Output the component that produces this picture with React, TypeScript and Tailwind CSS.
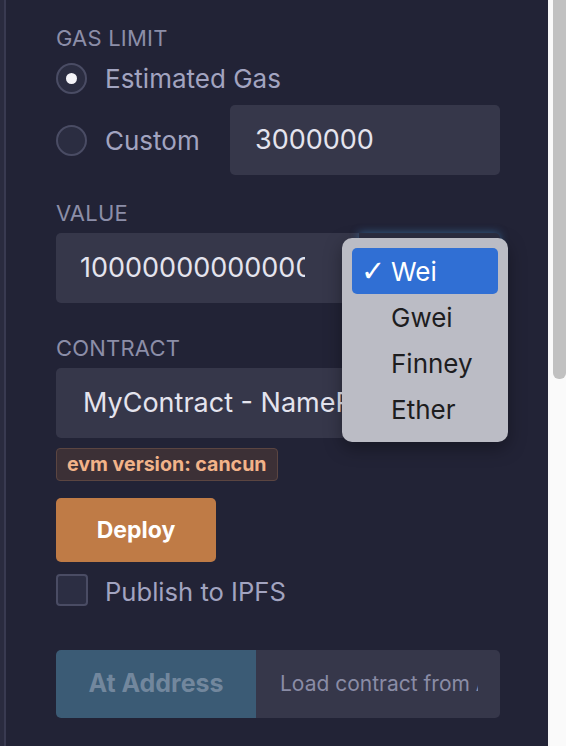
import React from "react";

const FONT = "font-['Inter','Noto_Sans',sans-serif]";

type RadioProps = { checked?: boolean };

function Radio({ checked }: RadioProps) {
  return (
    <span className="flex h-[31px] w-[31px] shrink-0 items-center justify-center rounded-full border-2 border-[#4a4c64] bg-[#2b2d41]">
      {checked ? <span className="h-[11px] w-[11px] rounded-full bg-[#f4f4f8]" /> : null}
    </span>
  );
}

function Label({ children }: { children: React.ReactNode }) {
  return (
    <div className="text-[22px] leading-[26px] uppercase tracking-[0.2px] text-[#8c8ea8]">
      {children}
    </div>
  );
}

const UNITS = ["Wei", "Gwei", "Finney", "Ether"];

function UnitMenu() {
  return (
    <div className="absolute left-[342px] top-[238px] w-[166px] rounded-[10px] bg-[#bbbcc5] p-[10px] shadow-[0_6px_18px_rgba(0,0,0,0.35)]">
      {UNITS.map((unit, i) => (
        <div
          key={unit}
          className={`flex h-[46px] items-center rounded-[5px] text-[26px] ${
            i === 0 ? "bg-[#306fd4] text-white" : "text-[#1d1d1f]"
          }`}
        >
          <span className="w-[39px] pl-[9px] font-['DejaVu_Sans',sans-serif] text-[29px] font-normal leading-none">
            {i === 0 ? "✓" : ""}
          </span>
          <span>{unit}</span>
        </div>
      ))}
    </div>
  );
}

export default function App() {
  return (
    <div className={`relative flex h-[746px] w-[566px] overflow-hidden bg-[#222336] ${FONT}`}>
      <div className="w-[4px] shrink-0 bg-[#2a2b3f]" />
      <div className="flex min-w-0 flex-1 flex-col border-l-2 border-[#393a51] pl-[50px] pr-[48px] pt-[25px]">
        <Label>Gas limit</Label>

        <div className="mt-[11px] flex h-[32px] items-center gap-[18px]">
          <Radio checked />
          <span className="text-[26px] text-[#a2a4c0]">Estimated Gas</span>
        </div>

        <div className="mt-[11px] flex h-[70px] items-center">
          <Radio />
          <span className="ml-[18px] text-[26px] text-[#a2a4c0]">Custom</span>
          <div className="ml-auto flex h-full w-[270px] items-center rounded-[5px] bg-[#36374a] pl-[25px] text-[27px] text-[#e4e4ee]">
            3000000
          </div>
        </div>

        <div className="mt-[25px]">
          <Label>Value</Label>
        </div>

        <div className="mt-[7px] flex h-[70px]">
          <div className="flex w-[303px] items-center overflow-hidden rounded-l-[5px] bg-[#36374a] pl-[24px] pr-[54px]">
            <div className="min-w-0 overflow-hidden whitespace-nowrap text-[27px] text-[#e4e4ee]">
              1000000000000000000
            </div>
          </div>
          <div className="min-w-0 flex-1 rounded-r-[5px] bg-[#2c2e42] shadow-[0_0_8px_rgba(70,150,220,0.55)]" />
        </div>

        <div className="mt-[32px]">
          <Label>Contract</Label>
        </div>

        <div className="mt-[7px] flex h-[70px] min-w-0 items-center overflow-hidden whitespace-nowrap rounded-[5px] bg-[#36374a] pl-[27px] text-[27px] text-[#e4e4ee]">
          MyContract - NameRegistry
        </div>

        <div className="mt-[10px] flex">
          <span className="flex h-[33px] items-center rounded-[4px] border-[1.5px] border-[#5b4541] bg-[#3c3036] px-[10px] text-[19.6px] font-bold text-[#f2b389]">
            evm version: cancun
          </span>
        </div>

        <div className="mt-[17px] flex">
          <button
            type="button"
            className="flex h-[64px] w-[160px] items-center justify-center rounded-[5px] bg-[#bf7b46] text-[23px] font-bold text-white"
          >
            Deploy
          </button>
        </div>

        <div className="mt-[12px] flex h-[32px] items-center gap-[17px]">
          <span className="h-[32px] w-[32px] rounded-[4px] border-2 border-[#4a4c64] bg-[#2c2e43]" />
          <span className="mt-[4px] text-[25.6px] text-[#a2a4c0]">Publish to IPFS</span>
        </div>

        <div className="mt-[44px] flex h-[68px] min-w-0">
          <button
            type="button"
            className="w-[200px] shrink-0 rounded-l-[5px] bg-[#3b5b75] text-[25px] font-bold text-[#72879d]"
          >
            At Address
          </button>
          <div className="flex min-w-0 flex-1 items-center overflow-hidden rounded-r-[5px] bg-[#36374a] pl-[24px] pr-[22px]">
            <div className="min-w-0 overflow-hidden whitespace-nowrap text-[21px] text-[#8a8ca6]">
              Load contract from Address
            </div>
          </div>
        </div>
      </div>

      <div className="w-[18px] shrink-0 border-l-2 border-[#f6f6f6] bg-[#fafafa] pl-[3px]">
        <div className="h-[379px] w-full rounded-b-[6px] bg-[#c1c1c1]" />
      </div>

      <UnitMenu />
    </div>
  );
}
